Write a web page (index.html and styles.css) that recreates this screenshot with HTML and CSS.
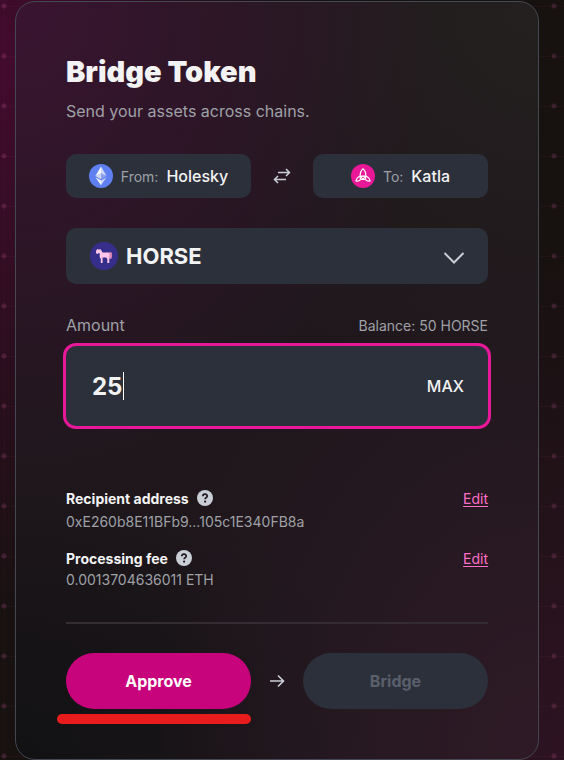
FILE: index.html
```html
<!DOCTYPE html>
<html lang="en">
<head>
<meta charset="utf-8">
<meta name="viewport" content="width=device-width, initial-scale=1">
<title>Bridge Token</title>
<link rel="stylesheet" href="styles.css">
</head>
<body>
<main class="card">
  <h1 class="title">Bridge Token</h1>
  <p class="subtitle">Send your assets across chains.</p>

  <div class="chains">
    <button type="button" class="chain">
      <svg class="chain-icon" viewBox="0 0 24 24" aria-hidden="true">
        <circle cx="12" cy="12" r="12" fill="#5f80f0"/>
        <path d="M12 2.500 6.400 12 12 9.500z" fill="#f4f6ff"/>
        <path d="M12 2.500l5.600 9.500L12 9.500z" fill="#cfd8fa"/>
        <path d="M6.400 12 12 9.500V15.300z" fill="#cfd8fa"/>
        <path d="M17.600 12 12 9.500V15.300z" fill="#8c9ff0"/>
        <path d="M6.600 13.400 12 16.600V21.300z" fill="#f4f6ff"/>
        <path d="M17.400 13.400 12 16.600V21.300z" fill="#cfd8fa"/>
      </svg>
      <span class="chain-label">From:</span>
      <span class="chain-name">Holesky</span>
    </button>
    <button type="button" class="swap" aria-label="Swap chains">
      <svg class="swap-icon" viewBox="0 0 18 18" aria-hidden="true">
        <path d="M5 5.500h11.500M13 2l3.500 3.500L13 9M13 12.500H1.500M5 9l-3.500 3.500L5 16"/>
      </svg>
    </button>
    <button type="button" class="chain">
      <svg class="chain-icon" viewBox="0 0 24 24" aria-hidden="true">
        <circle cx="12" cy="12" r="12" fill="#e81899"/>
        <g fill="none" stroke="#fff" stroke-width="1.200" stroke-linejoin="round">
          <path d="M12 4.600C8.800 7.600 8.600 11.600 9.500 15.700M12 4.600C15.200 7.600 15.400 11.600 14.500 15.700"/>
          <path d="M9.500 15.700C8.300 17 6.500 17.400 4.900 16.900C5.900 12.700 9.400 10.800 14.500 12.800"/>
          <path d="M14.500 15.700C15.700 17 17.500 17.400 19.100 16.900C18.100 12.700 14.600 10.800 9.500 12.800"/>
          <path d="M9.500 15.700C11.300 15.400 13.400 14.100 14.500 12.800M14.500 15.700C12.700 15.400 10.600 14.100 9.500 12.800"/>
        </g>
      </svg>
      <span class="chain-label">To:</span>
      <span class="chain-name">Katla</span>
    </button>
  </div>

  <button type="button" class="token">
    <svg class="token-icon" viewBox="0 0 28 28" aria-hidden="true">
      <circle cx="14" cy="14" r="14" fill="#352f8b"/>
      <path d="M18.500 10.500c2-1.200 3.700-.2 3.600 2-.1 2 .2 3-1.100 4.500h-1.500l.3-4z" fill="#d982b4"/>
      <path d="M7.200 7 8.500 7.500 10.300 7.200 11.500 8.500 12.500 10.600H18.500L19.800 12V15.200L19.300 16.500V21H17.300V17L16.300 15.600H12.600V21H10.800V17L9.700 15V11.500L8.800 10.900 7.300 12 6 11.200V9z" fill="#ffc6e9"/>
    </svg>
    <span class="token-name">HORSE</span>
    <svg class="chevron" viewBox="0 0 22 14" aria-hidden="true"><path d="M1.500 2 11 11.500 20.500 2"/></svg>
  </button>

  <div class="amount-head">
    <label class="amount-label" for="amount">Amount</label>
    <span class="balance">Balance: 50 HORSE</span>
  </div>
  <div class="amount-box">
    <input class="amount-input" id="amount" type="text" inputmode="decimal" value="25">
    <span class="caret"></span>
    <button type="button" class="max">MAX</button>
  </div>

  <section class="details">
    <div class="detail-head">
      <h2 class="detail-title">Recipient address</h2>
      <svg class="help" viewBox="0 0 16 16" aria-hidden="true"><circle cx="8" cy="8" r="8" fill="#caced6"/><path d="M5.800 6.300C5.900 3.300 10.300 3.600 10.200 6.200 10.100 7.600 8.200 7.600 8.100 9.300" fill="none" stroke="#1d171d" stroke-width="1.700"/><circle cx="8.100" cy="11.600" r="1.100" fill="#1d171d"/></svg>
      <a class="edit" href="#recipient">Edit</a>
    </div>
    <p class="detail-value">0xE260b8E11BFb9...105c1E340FB8a</p>
  </section>
  <section class="details fee">
    <div class="detail-head">
      <h2 class="detail-title">Processing fee</h2>
      <svg class="help" viewBox="0 0 16 16" aria-hidden="true"><circle cx="8" cy="8" r="8" fill="#caced6"/><path d="M5.800 6.300C5.900 3.300 10.300 3.600 10.200 6.200 10.100 7.600 8.200 7.600 8.100 9.300" fill="none" stroke="#1d171d" stroke-width="1.700"/><circle cx="8.100" cy="11.600" r="1.100" fill="#1d171d"/></svg>
      <a class="edit" href="#fee">Edit</a>
    </div>
    <p class="detail-value">0.0013704636011 ETH</p>
  </section>

  <hr class="divider">

  <div class="actions">
    <div class="step">
      <button type="button" class="action primary">Approve</button>
      <span class="marker"></span>
    </div>
    <svg class="next" viewBox="0 0 16 16" aria-hidden="true"><path d="M1 8h13.500M9 2.500 14.500 8 9 13.500"/></svg>
    <button type="button" class="action" disabled>Bridge</button>
  </div>
</main>
</body>
</html>
```
FILE: styles.css
```css
* { box-sizing: border-box; }

body {
  margin: 0;
  min-height: 100vh;
  padding: 1px 25px 0 15px;
  font-family: Inter, "Liberation Sans", sans-serif;
  color: #f3f3f3;
  background:
    radial-gradient(circle, rgba(200, 90, 150, 0.2) 0 2px, transparent 3px) -21px -19px / 50px 50px,
    linear-gradient(rgba(200, 60, 130, 0.05), rgba(200, 60, 130, 0.05)) 4px 0 / 1px 100% no-repeat,
    linear-gradient(transparent 49px, rgba(200, 60, 130, 0.06) 49px) 0 7px / 50px 50px,
    radial-gradient(ellipse 300px 560px at 0 60px, #420b2e, rgba(66, 11, 46, 0) 100%),
    radial-gradient(ellipse 300px 500px at 100% 100%, #2e1322, rgba(46, 19, 34, 0) 100%),
    #171110;
}

button, input { font: inherit; color: inherit; border: 0; padding: 0; }
button { cursor: pointer; }
h1, h2, p { margin: 0; }

.card {
  padding: 50px;
  border: 1px solid #444852;
  border-radius: 20px;
  background:
    radial-gradient(ellipse 420px 480px at 0 0, #3a1431, rgba(58, 20, 49, 0)),
    radial-gradient(ellipse 380px 400px at 100% 0, #24201f, rgba(36, 32, 31, 0)),
    radial-gradient(ellipse 380px 520px at 100% 100%, #2e1a26, rgba(46, 26, 38, 0)),
    radial-gradient(ellipse 360px 300px at 0 100%, #111113, rgba(17, 17, 19, 0)),
    #1f171c;
}

.title { font-size: 29px; line-height: 40px; font-weight: 900; }
.subtitle { margin-top: 7px; font-size: 16px; line-height: 24px; color: #9fa1a7; }

.chains {
  display: grid;
  grid-template-columns: 185fr 62px 175fr;
  align-items: center;
  margin-top: 31px;
}
.chain {
  display: flex;
  align-items: center;
  justify-content: center;
  gap: 8px;
  height: 44px;
  border-radius: 10px;
  background: #2b303b;
}
.chain-icon { width: 24px; height: 24px; }
.chain-label { font-size: 14px; color: #9fa1a7; }
.chain-name { font-size: 16px; font-weight: 500; }
.swap { justify-self: center; display: flex; background: none; }
.swap-icon { width: 18px; height: 18px; fill: none; stroke: #caced6; stroke-width: 1.500; }

.token {
  display: flex;
  align-items: center;
  gap: 8px;
  width: 100%;
  height: 56px;
  margin-top: 30px;
  padding: 0 23px 0 24px;
  border-radius: 10px;
  background: #2b303b;
}
.token-icon { width: 28px; height: 28px; }
.token-name { font-size: 22px; font-weight: 700; }
.chevron { width: 22px; height: 14px; margin: 4px 0 0 auto; fill: none; stroke: #caced6; stroke-width: 2; }

.amount-head {
  display: flex;
  align-items: center;
  justify-content: space-between;
  height: 24px;
  margin: 29px 0 9px;
  color: #9fa1a7;
}
.amount-label { font-size: 16px; }
.balance { font-size: 14px; }
.amount-box {
  position: relative;
  display: flex;
  align-items: center;
  height: 80px;
  padding: 0 24px 0 26px;
  border-radius: 10px;
  background: #2b303b;
  box-shadow: 0 0 0 3px #e81899;
}
.amount-input { flex: 1; min-width: 0; background: none; outline: 0; font-size: 24px; font-weight: 700; }
.caret { position: absolute; left: 57px; top: 26px; width: 1px; height: 28px; background: #fff; }
.max { background: none; font-size: 16px; font-weight: 500; }

.details { margin-top: 62px; }
.fee { margin-top: 16px; }
.detail-head { display: flex; align-items: center; height: 20px; }
.detail-title { font-size: 14px; font-weight: 700; }
.help { width: 16px; height: 16px; margin-left: 8px; }
.edit { margin-left: auto; font-size: 14px; color: #ff6fc8; text-underline-offset: 2px; }
.detail-value { margin-top: 4px; font-size: 14px; line-height: 20px; color: #9fa1a7; }
.fee .detail-value { margin-top: 2px; }

.divider { height: 2px; margin: 32px 0 29px; border: 0; background: #352c33; }

.actions {
  display: grid;
  grid-template-columns: 1fr 52px 1fr;
  align-items: center;
}
.step { position: relative; }
.action {
  width: 100%;
  height: 56px;
  border-radius: 28px;
  background: #2b303b;
  font-size: 16px;
  font-weight: 700;
}
.action:disabled { color: #5b5f6c; cursor: default; }
.primary { display: block; background: #c8047d; color: #fff; }
.marker {
  position: absolute;
  left: -9px;
  right: 0;
  top: 61px;
  height: 10px;
  border-radius: 5px;
  background: #e81c1c;
}
.next { justify-self: center; width: 16px; height: 16px; fill: none; stroke: #caced6; stroke-width: 1.600; }
```
